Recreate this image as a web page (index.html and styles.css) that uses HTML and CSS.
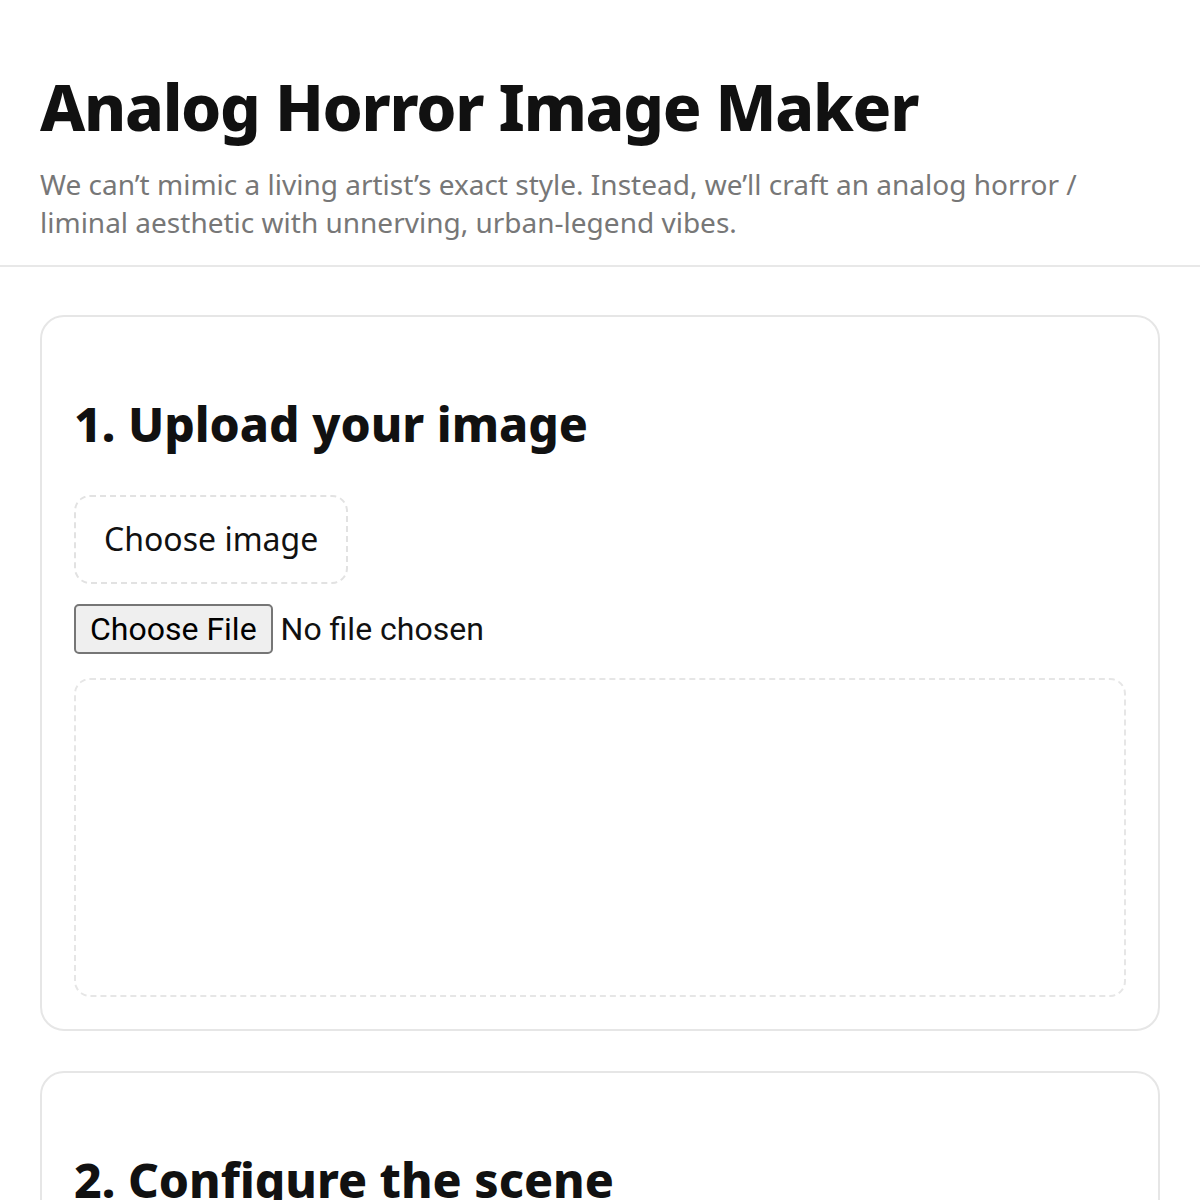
FILE: index.html
```html
<!DOCTYPE html>
<html lang="en">
<head>
  <meta charset="UTF-8">
  <title>Analog Horror Image Maker</title>
  <meta name="viewport" content="width=device-width, initial-scale=1.0">
  <link rel="stylesheet" href="styles.css">
</head>
<body>
  <header class="page-header">
    <h1 class="page-title">Analog Horror Image Maker</h1>
    <p class="page-sub">We can’t mimic a living artist’s exact style. Instead, we’ll craft an analog horror / liminal aesthetic with unnerving, urban-legend vibes.</p>
  </header>
  <main class="page-main">
    <section class="card">
      <h2 class="card-title">1. Upload your image</h2>
      <label class="pick-btn" for="fileInput">Choose image</label>
      <input class="file-input" type="file" id="fileInput" accept="image/*">
      <div class="preview"></div>
    </section>
    <section class="card">
      <h2 class="card-title">2. Configure the scene</h2>
      <div class="preview"></div>
    </section>
  </main>
</body>
</html>
```

FILE: styles.css
```css
body {
  margin: 0;
  padding: 0;
  background: #fff;
  color: #111;
  font-family: 'Noto Sans', 'Open Sans', sans-serif;
}
.page-header {
  padding: 40px 40px 24px 40px;
  border-bottom: 2px solid #e8e8e8;
}
.page-title {
  margin: 29px 0 0 0;
  font-size: 64px;
  line-height: 1.2;
  font-weight: 800;
  letter-spacing: -1.3px;
  color: #111;
}
.page-sub {
  margin: 19px 0 0 0;
  font-size: 28px;
  line-height: 38px;
  color: #777;
  max-width: 1080px;
}
.page-main {
  padding: 48px 40px;
  display: flex;
  flex-direction: column;
  gap: 40px;
}
.card {
  border: 2px solid #e6e6e6;
  border-radius: 24px;
  padding: 32px;
  display: flex;
  flex-direction: column;
  align-items: flex-start;
}
.card-title {
  margin: 46px 0 43px 0;
  font-size: 48px;
  line-height: 1.2;
  font-weight: 800;
}
.pick-btn {
  display: inline-block;
  padding: 23px 28px 24px 28px;
  font-size: 32px;
  line-height: 38px;
  border: 2px dashed #e2e2e2;
  border-radius: 16px;
  cursor: pointer;
}
.file-input {
  zoom: 2;
  margin-top: 10px;
  font-family: Roboto, sans-serif;
  font-size: 16px;
}
.file-input::file-selector-button {
  font-family: inherit;
}
.preview {
  align-self: stretch;
  height: 315px;
  margin-top: 24px;
  border: 2px dashed #e6e6e6;
  border-radius: 16px;
}
```
